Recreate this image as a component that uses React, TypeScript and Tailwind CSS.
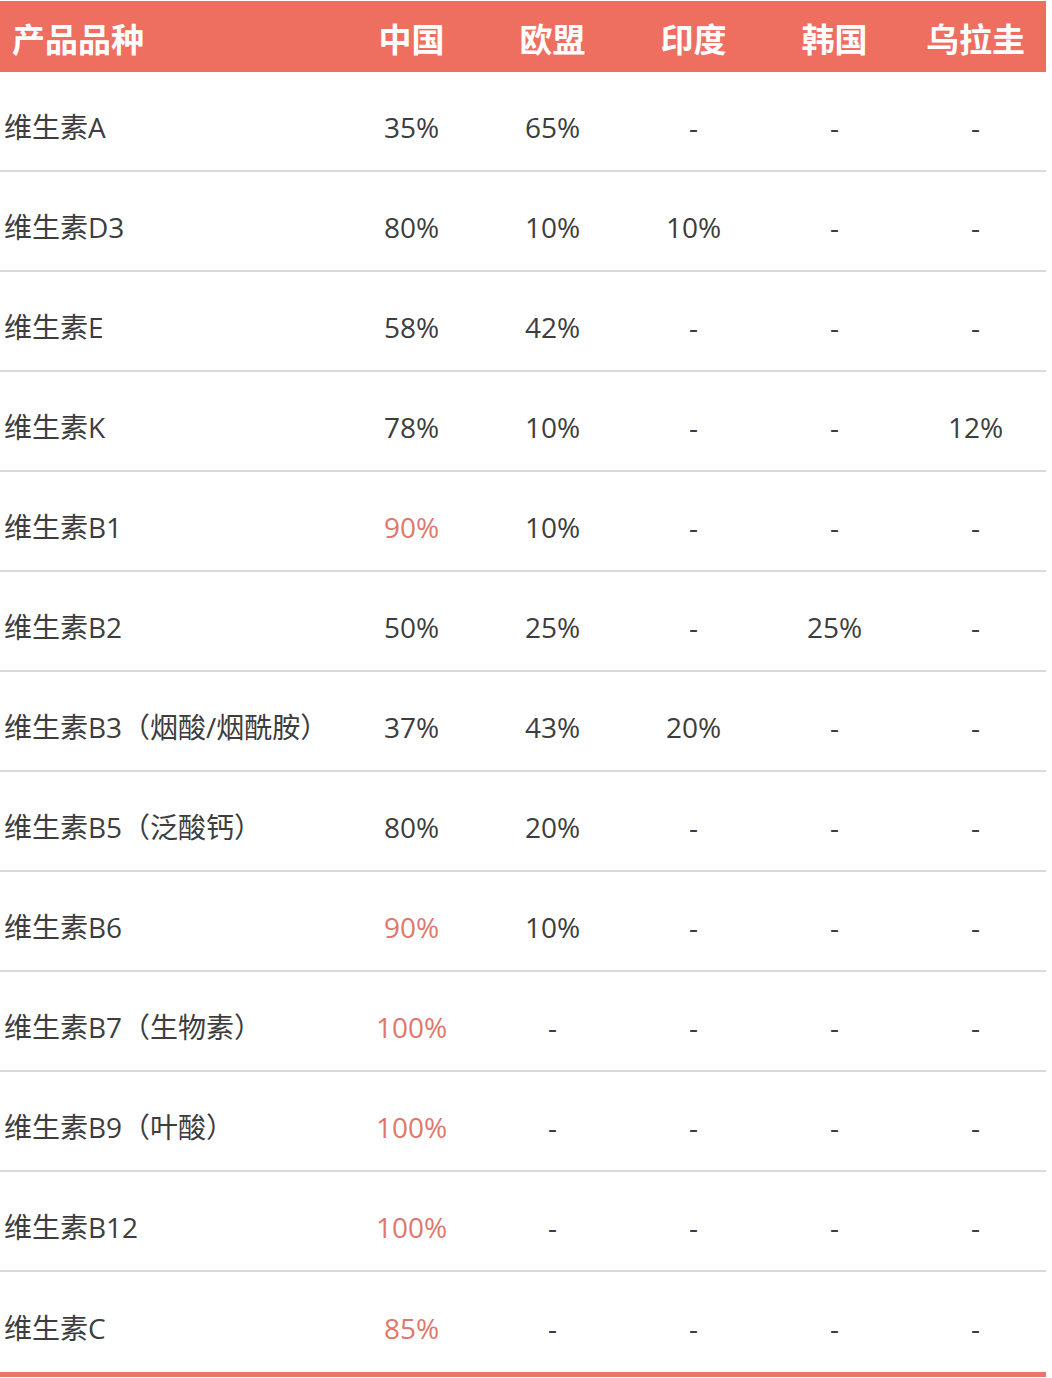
const cols = ["中国", "欧盟", "印度", "韩国", "乌拉圭"];

type Row = { name: string; vals: string[]; hot?: boolean };

const rows: Row[] = [
  { name: "维生素A", vals: ["35%", "65%", "-", "-", "-"] },
  { name: "维生素D3", vals: ["80%", "10%", "10%", "-", "-"] },
  { name: "维生素E", vals: ["58%", "42%", "-", "-", "-"] },
  { name: "维生素K", vals: ["78%", "10%", "-", "-", "12%"] },
  { name: "维生素B1", vals: ["90%", "10%", "-", "-", "-"], hot: true },
  { name: "维生素B2", vals: ["50%", "25%", "-", "25%", "-"] },
  { name: "维生素B3（烟酸/烟酰胺）", vals: ["37%", "43%", "20%", "-", "-"] },
  { name: "维生素B5（泛酸钙）", vals: ["80%", "20%", "-", "-", "-"] },
  { name: "维生素B6", vals: ["90%", "10%", "-", "-", "-"], hot: true },
  { name: "维生素B7（生物素）", vals: ["100%", "-", "-", "-", "-"], hot: true },
  { name: "维生素B9（叶酸）", vals: ["100%", "-", "-", "-", "-"], hot: true },
  { name: "维生素B12", vals: ["100%", "-", "-", "-", "-"], hot: true },
  { name: "维生素C", vals: ["85%", "-", "-", "-", "-"], hot: true },
];

export default function App() {
  return (
    <div
      className="min-h-[1378px] w-[1052px] bg-white [text-spacing-trim:space-all]"
      style={{ fontFamily: '"Open Sans", "Noto Sans CJK SC", sans-serif' }}
    >
      <div className="w-[1046px] border-b-[5px] border-[#e9766a]">
        <div className="mt-px flex h-[71px] items-center bg-[#ee6e60] pt-[6px] text-[33px] font-bold text-white">
          <div className="w-[341px] pl-3">产品品种</div>
          {cols.map((c) => (
            <div key={c} className="w-[141px] text-center">
              {c}
            </div>
          ))}
        </div>
        {rows.map((r, i) => (
          <div
            key={r.name}
            className={`flex h-[100px] items-center pt-[11px] text-[28px] text-[#3d3d3d] ${
              i < rows.length - 1 ? "border-b-2 border-[#dadada]" : ""
            }`}
          >
            <div className="w-[341px] pl-1 whitespace-nowrap">{r.name}</div>
            {r.vals.map((v, j) => (
              <div
                key={j}
                className={`w-[141px] text-center ${
                  j === 0 && r.hot ? "text-[#e0776d]" : ""
                }`}
              >
                {v}
              </div>
            ))}
          </div>
        ))}
      </div>
    </div>
  );
}
